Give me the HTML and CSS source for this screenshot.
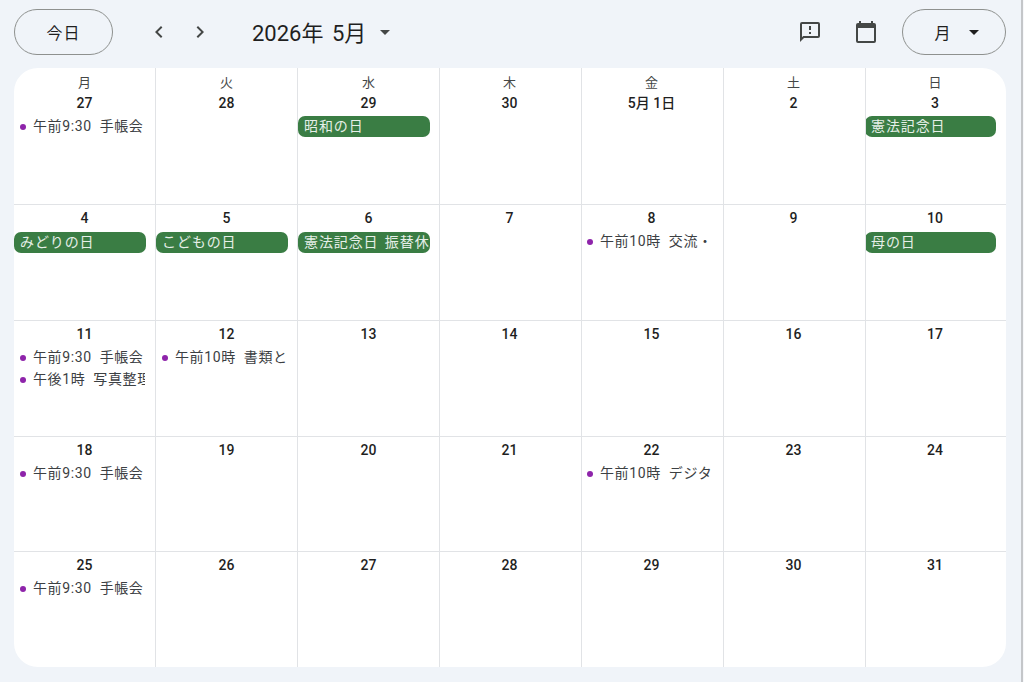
FILE: index.html
```html
<!DOCTYPE html>
<html lang="ja">
<head>
    <meta charset="UTF-8">
    <title>カレンダー</title>
    <link rel="stylesheet" href="styles.css">
</head>
<body>
    <header class="toolbar">
        <button class="pill today">今日</button>
        <div class="nav-arrows">
            <svg class="chev" viewBox="0 0 24 24"><path d="M15.4 7.4 14 6l-6 6 6 6 1.4-1.4-4.6-4.6z"/></svg>
            <svg class="chev" viewBox="0 0 24 24"><path d="M8.6 7.4 10 6l6 6-6 6-1.4-1.4 4.6-4.6z"/></svg>
        </div>
        <div class="month-title">2026年 5月<span class="caret"></span></div>
        <div class="spacer"></div>
        <svg class="tool-icon feedback" viewBox="0 0 24 24"><path d="M20 2H4a2 2 0 0 0-2 2v18l4-4h14a2 2 0 0 0 2-2V4a2 2 0 0 0-2-2zm0 14H5.2L4 17.2V4h16v12zM11 12h2v2h-2zm0-6h2v4h-2z"/></svg>
        <svg class="tool-icon cal" viewBox="0 0 24 24"><path d="M20 3h-1V1h-2v2H7V1H5v2H4a2 2 0 0 0-2 2v16a2 2 0 0 0 2 2h16a2 2 0 0 0 2-2V5a2 2 0 0 0-2-2zm0 18H4V8h16v13z"/></svg>
        <button class="pill view">月<span class="caret small"></span></button>
    </header>

    <main class="month">
        <div class="day first">
            <div class="weekday">月</div><div class="date">27</div>
            <div class="event"><i class="dot"></i><span class="ev-text">午前9:30 手帳会</span></div>
        </div>
        <div class="day first">
            <div class="weekday">火</div><div class="date">28</div>
        </div>
        <div class="day first">
            <div class="weekday">水</div><div class="date">29</div>
            <div class="holiday">昭和の日</div>
        </div>
        <div class="day first">
            <div class="weekday">木</div><div class="date">30</div>
        </div>
        <div class="day first">
            <div class="weekday">金</div><div class="date">5月 1日</div>
        </div>
        <div class="day first">
            <div class="weekday">土</div><div class="date">2</div>
        </div>
        <div class="day first">
            <div class="weekday">日</div><div class="date">3</div>
            <div class="holiday">憲法記念日</div>
        </div>

        <div class="day"><div class="date">4</div><div class="holiday">みどりの日</div></div>
        <div class="day"><div class="date">5</div><div class="holiday">こどもの日</div></div>
        <div class="day"><div class="date">6</div><div class="holiday">憲法記念日 振替休</div></div>
        <div class="day"><div class="date">7</div></div>
        <div class="day">
            <div class="date">8</div>
            <div class="event"><i class="dot"></i><span class="ev-text">午前10時 交流・</span></div>
        </div>
        <div class="day"><div class="date">9</div></div>
        <div class="day"><div class="date">10</div><div class="holiday">母の日</div></div>

        <div class="day">
            <div class="date">11</div>
            <div class="event"><i class="dot"></i><span class="ev-text">午前9:30 手帳会</span></div>
            <div class="event"><i class="dot"></i><span class="ev-text">午後1時 写真整理</span></div>
        </div>
        <div class="day">
            <div class="date">12</div>
            <div class="event"><i class="dot"></i><span class="ev-text">午前10時 書類と</span></div>
        </div>
        <div class="day"><div class="date">13</div></div>
        <div class="day"><div class="date">14</div></div>
        <div class="day"><div class="date">15</div></div>
        <div class="day"><div class="date">16</div></div>
        <div class="day"><div class="date">17</div></div>

        <div class="day">
            <div class="date">18</div>
            <div class="event"><i class="dot"></i><span class="ev-text">午前9:30 手帳会</span></div>
        </div>
        <div class="day"><div class="date">19</div></div>
        <div class="day"><div class="date">20</div></div>
        <div class="day"><div class="date">21</div></div>
        <div class="day">
            <div class="date">22</div>
            <div class="event"><i class="dot"></i><span class="ev-text">午前10時 デジタ</span></div>
        </div>
        <div class="day"><div class="date">23</div></div>
        <div class="day"><div class="date">24</div></div>

        <div class="day">
            <div class="date">25</div>
            <div class="event"><i class="dot"></i><span class="ev-text">午前9:30 手帳会</span></div>
        </div>
        <div class="day"><div class="date">26</div></div>
        <div class="day"><div class="date">27</div></div>
        <div class="day"><div class="date">28</div></div>
        <div class="day"><div class="date">29</div></div>
        <div class="day"><div class="date">30</div></div>
        <div class="day"><div class="date">31</div></div>
    </main>
</body>
</html>
```
FILE: styles.css
```css
* {
    margin: 0;
    padding: 0;
    box-sizing: border-box;
}
html {
    background: #f7f8fa;
}
body {
    font-family: Roboto, "Noto Sans CJK JP", sans-serif;
    background: #f0f4f9;
    color: #1f1f1f;
    width: 1023px;
    height: 682px;
    overflow: hidden;
    padding: 0 15px 0 14px;
    border-right: 2px solid #c4c6c9;
}
.toolbar {
    height: 68px;
    display: flex;
    align-items: center;
    padding-bottom: 4px;
}
.pill {
    height: 46px;
    border: 1px solid #8e918f;
    border-radius: 23px;
    background: transparent;
    font-family: inherit;
    font-size: 16px;
    color: #1f1f1f;
}
.today {
    width: 99px;
    letter-spacing: 1px;
}
.view {
    width: 104px;
    margin-left: 24px;
    padding-left: 5px;
    display: flex;
    align-items: center;
    justify-content: center;
    gap: 18px;
}
.nav-arrows {
    display: flex;
    gap: 17px;
    margin-left: 34px;
}
.chev {
    width: 24px;
    height: 24px;
    fill: #444746;
}
.month-title {
    margin-left: 40px;
    padding-bottom: 3px;
    font-size: 22px;
    word-spacing: 3px;
    display: flex;
    align-items: center;
}
.caret {
    display: inline-block;
    width: 0;
    height: 0;
    margin: 3px 0 0 14px;
    border-left: 5px solid transparent;
    border-right: 5px solid transparent;
    border-top: 5px solid #444746;
}
.caret.small {
    margin: 0;
    border-top-color: #1f1f1f;
}
.spacer {
    flex: 1;
}
.tool-icon {
    width: 24px;
    height: 24px;
    fill: #444746;
}
.cal {
    margin-left: 32px;
}
.month {
    height: 599px;
    background: #fff;
    border-radius: 24px;
    overflow: hidden;
    display: grid;
    grid-template-columns: 141px repeat(5, 142px) 141px;
    grid-template-rows: 136px repeat(4, 1fr);
}
.day {
    border-left: 1px solid #e1e3e6;
    border-top: 1px solid #e1e3e6;
    display: flex;
    flex-direction: column;
    align-items: center;
    padding-top: 3px;
    min-width: 0;
    overflow: hidden;
}
.day:nth-child(7n+1) {
    border-left: none;
}
.day:nth-child(7n+4),
.day:nth-child(7n+5),
.day:nth-child(7n+6),
.day:nth-child(7n) {
    padding-right: 2px;
}
.day.first {
    border-top: none;
    padding-top: 5px;
}
.weekday {
    font-size: 13px;
    line-height: 20px;
    height: 20px;
    color: #444746;
}
.date {
    font-size: 14px;
    font-weight: 500;
    line-height: 20px;
    height: 20px;
}
.date + .event {
    margin-top: 2px;
}
.event {
    align-self: flex-start;
    display: flex;
    align-items: center;
    height: 22px;
    padding-left: 6px;
    font-size: 14px;
    letter-spacing: 0.6px;
    word-spacing: 4px;
    color: #3c4043;
    width: 131px;
    overflow: hidden;
    white-space: nowrap;
}
.day:nth-child(7n+5) .event {
    padding-left: 5px;
}
.dot {
    flex: none;
    width: 6px;
    height: 6px;
    border-radius: 50%;
    background: #8e24aa;
    margin: 2px 7px 0 0;
}
.ev-text {
    overflow: hidden;
    margin-bottom: 2px;
}
.holiday {
    align-self: flex-start;
    width: 132px;
    height: 21px;
    margin-top: 4px;
    padding: 0 6px;
    border-radius: 7px;
    background: #3a7d44;
    color: #e6efe8;
    font-size: 14px;
    letter-spacing: 0.9px;
    word-spacing: 2px;
    line-height: 20px;
    white-space: nowrap;
    overflow: hidden;
}
.first .holiday {
    margin-top: 3px;
}
.day:nth-child(7n) .holiday {
    width: 131px;
    margin-left: -1px;
}
```
